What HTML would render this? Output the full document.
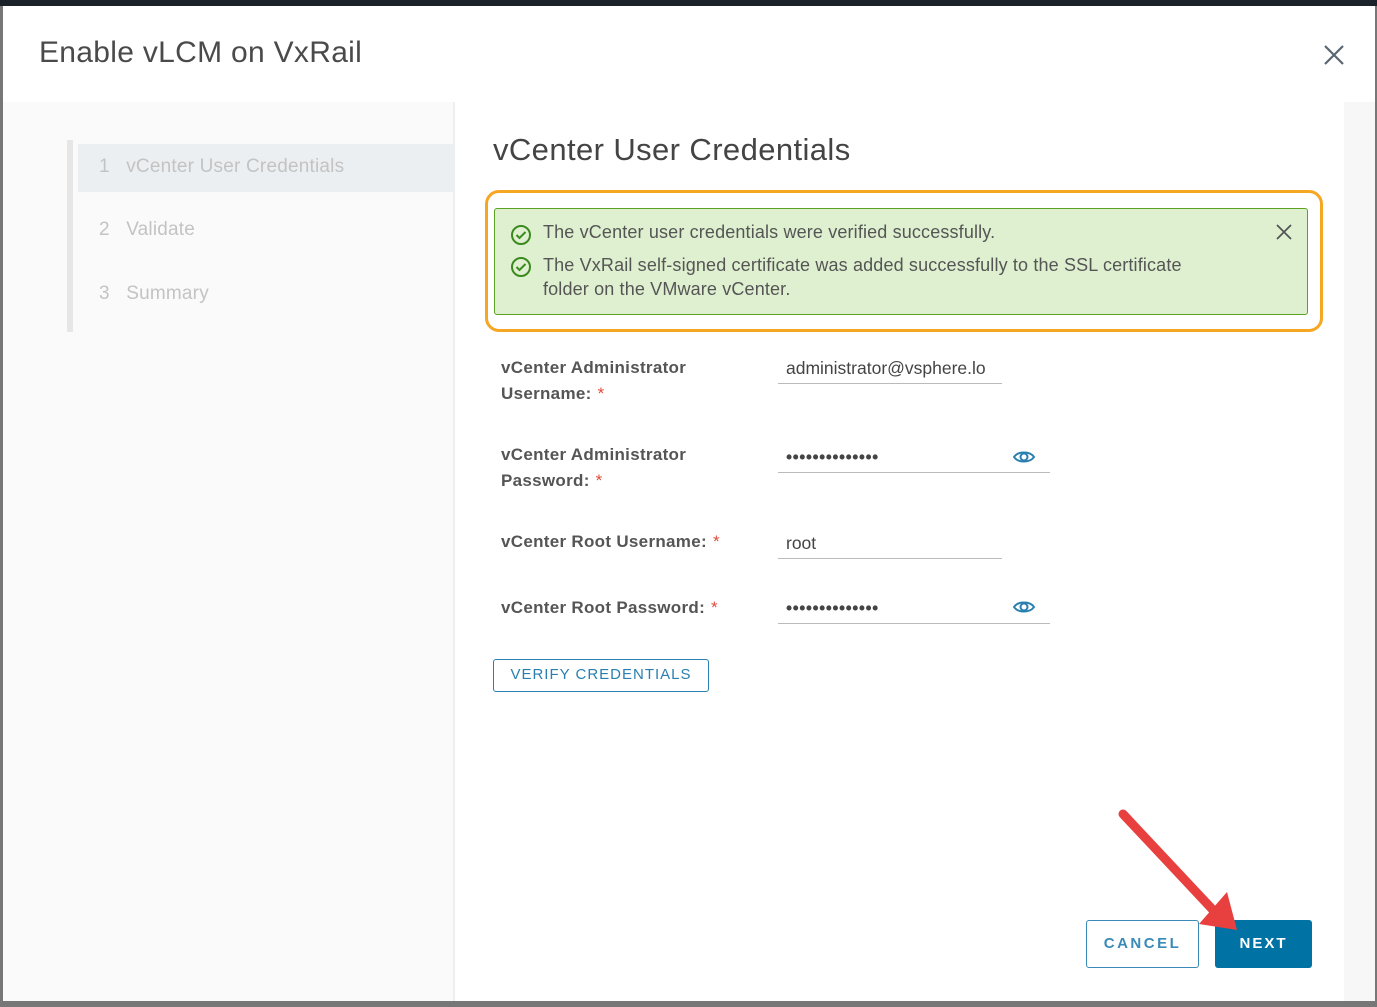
<!DOCTYPE html>
<html><head><meta charset="utf-8"><style>
*{margin:0;padding:0;box-sizing:border-box}
body{width:1377px;height:1007px;background:#777;position:relative;overflow:hidden;font-family:"Liberation Sans",sans-serif;color:#333}
.top{position:absolute;left:0;top:0;width:1377px;height:6px;background:#1b2229}
.dlg{position:absolute;left:3px;top:6px;width:1372px;height:995px;background:#fff}
.title{position:absolute;left:36px;top:30px;font-size:30px;color:#4a4a4a;letter-spacing:.3px}
.x{position:absolute;left:1320px;top:38px}
.left{position:absolute;left:0;top:96px;width:452px;height:899px;background:#fafafa;border-right:2px solid #eee}
.rail{position:absolute;left:64px;top:134px;width:6px;height:192px;background:#e6e6e6}
.sel{position:absolute;left:75px;top:138px;width:377px;height:48px;background:#eceff2}
.step{position:absolute;font-size:19px;color:#c3c3c3;letter-spacing:.2px}
.rstrip{position:absolute;left:1341px;top:96px;width:31px;height:899px;background:#f7f7f7}
h2{position:absolute;left:490px;top:126px;font-size:31px;font-weight:normal;color:#444;letter-spacing:.4px}
.hl{position:absolute;left:482px;top:184px;width:838px;height:142px;border:3px solid #f5a623;border-radius:14px}
.alert{position:absolute;left:491px;top:202px;width:814px;height:107px;background:#dff0d0;border:1.5px solid #5aa220;border-radius:3px}
.al{position:absolute;font-size:18px;color:#555;line-height:24px;letter-spacing:.15px}
.lab{position:absolute;left:498px;font-size:17px;font-weight:bold;color:#555;line-height:26px;letter-spacing:.3px}
.lab span{color:#e04b3a;font-weight:normal;margin-left:6px}
.inp{position:absolute;left:775px;border-bottom:1.5px solid #bbb;height:30px;font-size:17.5px;color:#444;padding-left:8px;line-height:28px}
.btn{position:absolute;font-size:15px;letter-spacing:1.5px;text-align:center;border-radius:3px}
</style></head><body>
<div class="top"></div>
<div class="dlg">
<div class="title">Enable vLCM on VxRail</div>
<svg class="x" width="22" height="22" viewBox="0 0 22 22"><path d="M2 2L20 20M20 2L2 20" stroke="#5a6670" stroke-width="2.2"/></svg>
<div class="left"></div>
<div class="rail"></div>
<div class="sel"></div>
<div class="step" style="left:96px;top:150px">1&nbsp;&nbsp;&nbsp;vCenter User Credentials</div>
<div class="step" style="left:96px;top:213px">2&nbsp;&nbsp;&nbsp;Validate</div>
<div class="step" style="left:96px;top:277px">3&nbsp;&nbsp;&nbsp;Summary</div>
<div class="rstrip"></div>
<h2>vCenter User Credentials</h2>
<div class="hl"></div>
<div class="alert"></div>
<svg style="position:absolute;left:507px;top:218px" width="22" height="22" viewBox="0 0 22 22"><circle cx="11" cy="11" r="9" fill="none" stroke="#3c8a1e" stroke-width="2"/><path d="M6.5 11l3 3 6-6" fill="none" stroke="#3c8a1e" stroke-width="2"/></svg>
<svg style="position:absolute;left:507px;top:250px" width="22" height="22" viewBox="0 0 22 22"><circle cx="11" cy="11" r="9" fill="none" stroke="#3c8a1e" stroke-width="2"/><path d="M6.5 11l3 3 6-6" fill="none" stroke="#3c8a1e" stroke-width="2"/></svg>
<div class="al" style="left:540px;top:214px">The vCenter user credentials were verified successfully.</div>
<div class="al" style="left:540px;top:247px">The VxRail self-signed certificate was added successfully to the SSL certificate<br>folder on the VMware vCenter.</div>
<svg style="position:absolute;left:1272px;top:217px" width="18" height="18" viewBox="0 0 18 18"><path d="M2 2L16 16M16 2L2 16" stroke="#555" stroke-width="1.8"/></svg>

<div class="lab" style="top:349px">vCenter Administrator<br>Username:<span>*</span></div>
<div class="inp" style="top:348px;width:224px;overflow:hidden;white-space:nowrap">administrator@vsphere.lo</div>
<div class="lab" style="top:436px">vCenter Administrator<br>Password:<span>*</span></div>
<div class="inp" style="top:437px;width:272px;font-weight:bold;letter-spacing:.5px">••••••••••••••</div>
<div class="lab" style="top:523px">vCenter Root Username:<span>*</span></div>
<div class="inp" style="top:523px;width:224px">root</div>
<div class="lab" style="top:589px">vCenter Root Password:<span>*</span></div>
<div class="inp" style="top:588px;width:272px;font-weight:bold;letter-spacing:.5px">••••••••••••••</div>
<svg style="position:absolute;left:1010px;top:443px" width="22" height="16" viewBox="0 0 22 16"><path d="M1 8C5 2 17 2 21 8C17 14 5 14 1 8Z" fill="none" stroke="#2a7fb0" stroke-width="2"/><circle cx="11" cy="8" r="3.5" fill="none" stroke="#2a7fb0" stroke-width="2"/></svg>
<svg style="position:absolute;left:1010px;top:593px" width="22" height="16" viewBox="0 0 22 16"><path d="M1 8C5 2 17 2 21 8C17 14 5 14 1 8Z" fill="none" stroke="#2a7fb0" stroke-width="2"/><circle cx="11" cy="8" r="3.5" fill="none" stroke="#2a7fb0" stroke-width="2"/></svg>

<div class="btn" style="left:490px;top:653px;width:216px;height:33px;border:1.5px solid #2a7fb0;color:#2a7fb0;line-height:30px;font-size:15px;letter-spacing:1px">VERIFY CREDENTIALS</div>
<div class="btn" style="left:1083px;top:914px;width:113px;height:48px;border:1.5px solid #3a8ab8;color:#3a8ab8;line-height:45px;font-weight:bold;letter-spacing:2.5px">CANCEL</div>
<div class="btn" style="left:1212px;top:914px;width:97px;height:48px;background:#0072a3;color:#fff;line-height:48px;font-weight:bold;letter-spacing:2px">NEXT</div>
<svg style="position:absolute;left:1108px;top:800px" width="140" height="130" viewBox="0 0 140 130"><path d="M12 8L102 104" stroke="#e8403f" stroke-width="9" stroke-linecap="round"/><path d="M88 118L126 124L116 86Z" fill="#e8403f"/></svg>
</div>
</body></html>
